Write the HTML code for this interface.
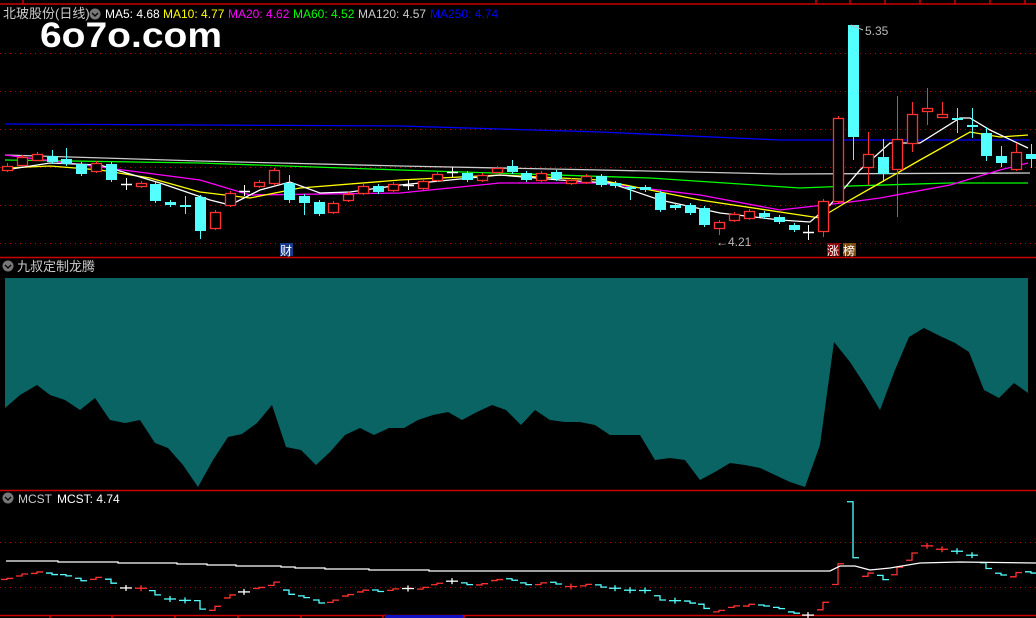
<!DOCTYPE html>
<html><head><meta charset="utf-8"><style>
html,body{margin:0;padding:0;background:#000;width:1036px;height:618px;overflow:hidden}
svg{display:block}
text{font-family:"Liberation Sans","Noto Sans CJK SC",sans-serif}
</style></head><body>
<svg id="s" width="1036" height="618" viewBox="0 0 1036 618" xmlns="http://www.w3.org/2000/svg">
<rect width="1036" height="618" fill="#000"/>
<g stroke="#a00" stroke-width="1" stroke-dasharray="1,4">
<line x1="0" y1="53.5" x2="1036" y2="53.5"/><line x1="0" y1="91.5" x2="1036" y2="91.5"/>
<line x1="0" y1="129.5" x2="1036" y2="129.5"/><line x1="0" y1="167.5" x2="1036" y2="167.5"/>
<line x1="0" y1="205.5" x2="1036" y2="205.5"/><line x1="0" y1="243.5" x2="1036" y2="243.5"/>
<line x1="0" y1="542.5" x2="1036" y2="542.5"/><line x1="0" y1="587.5" x2="1036" y2="587.5"/>
</g>
<g stroke="#c00" stroke-width="1.5">
<line x1="0" y1="4" x2="1036" y2="4"/><line x1="23" y1="0" x2="23" y2="4"/>
<line x1="816" y1="0" x2="816" y2="4"/><line x1="850" y1="0" x2="850" y2="4"/><line x1="885" y1="0" x2="885" y2="4"/><line x1="920" y1="0" x2="920" y2="4"/><line x1="955" y1="0" x2="955" y2="4"/><line x1="990" y1="0" x2="990" y2="4"/><line x1="1025" y1="0" x2="1025" y2="4"/>
<line x1="0" y1="257.5" x2="1036" y2="257.5"/><line x1="0" y1="490.5" x2="1036" y2="490.5"/>
<line x1="0" y1="615.5" x2="1036" y2="615.5"/>
<line x1="50" y1="615" x2="50" y2="618"/><line x1="112" y1="615" x2="112" y2="618"/><line x1="175" y1="615" x2="175" y2="618"/><line x1="238" y1="615" x2="238" y2="618"/><line x1="301" y1="615" x2="301" y2="618"/><line x1="383" y1="615" x2="383" y2="618"/><line x1="464" y1="615" x2="464" y2="618"/>
</g>
<rect x="385" y="615" width="78" height="3" fill="#1010c0"/>
<g id="ind"></g>
<g id="ma" fill="none" stroke-width="1.3"></g>
<g id="cd"></g>
<g id="mc"></g>
<text x="3" y="18" font-size="13" fill="#ccc">北玻股份(日线)</text>
<circle cx="95" cy="14" r="5.5" fill="#777"/><path d="M92 13 L95 16 L98 13" stroke="#000" stroke-width="1.3" fill="none"/>
<text x="105" y="18" font-size="12" fill="#fff">MA5: 4.68</text>
<text x="163" y="18" font-size="12" fill="#ff0">MA10: 4.77</text>
<text x="228" y="18" font-size="12" fill="#f0f">MA20: 4.62</text>
<text x="293" y="18" font-size="12" fill="#0f0">MA60: 4.52</text>
<text x="358" y="18" font-size="12" fill="#ccc">MA120: 4.57</text>
<text x="430" y="18" font-size="12" fill="#00f">MA250: 4.74</text>
<text x="40" y="47" font-size="35" font-weight="bold" fill="#fff" textLength="182" lengthAdjust="spacingAndGlyphs">6o7o.com</text>
<text x="865" y="35" font-size="12" fill="#bbb">5.35</text>
<path d="M851 25 L863 30" stroke="#bbb" fill="none"/>
<text x="716" y="246" font-size="12" fill="#bbb">←4.21</text>
<rect x="280" y="243" width="13" height="13" fill="#1a3a8a"/><text x="280" y="255" font-size="12" fill="#fff">财</text>
<rect x="827" y="243" width="13" height="13" fill="#8a0a0a"/><text x="827" y="255" font-size="12" fill="#fff">涨</text>
<rect x="843" y="243" width="13" height="13" fill="#7a4a10"/><text x="843" y="255" font-size="12" fill="#fff">榜</text>
<circle cx="8" cy="266" r="5.5" fill="#777"/><path d="M5 265 L8 268 L11 265" stroke="#000" stroke-width="1.3" fill="none"/>
<text x="17" y="271" font-size="13" fill="#ccc">九叔定制龙腾</text>
<circle cx="8" cy="498" r="5.5" fill="#777"/><path d="M5 497 L8 500 L11 497" stroke="#000" stroke-width="1.3" fill="none"/>
<text x="18" y="503" font-size="12" fill="#ccc">MCST</text>
<text x="57" y="503" font-size="12" fill="#fff">MCST: 4.74</text>
</svg>
<script>
var NS="http://www.w3.org/2000/svg";
function el(p,t,a){var e=document.createElementNS(NS,t);for(var k in a)e.setAttribute(k,a[k]);p.appendChild(e);return e;}
var pts=[[5,408],[20,395],[37,385],[50,395],[65,400],[80,410],[95,398],[110,420],[125,423],[140,420],[155,443],[168,448],[183,465],[198,487],[213,460],[228,437],[242,434],[257,423],[272,405],[286,447],[301,450],[316,465],[330,452],[345,435],[360,428],[374,435],[389,428],[404,428],[418,420],[433,415],[448,412],[462,420],[477,412],[492,405],[506,410],[521,425],[535,410],[550,420],[565,422],[580,422],[595,425],[610,435],[625,435],[640,435],[655,460],[670,458],[685,460],[700,480],[715,472],[730,463],[745,465],[760,468],[775,475],[790,482],[805,487],[820,445],[834,342],[850,362],[865,385],[880,410],[895,370],[909,337],[924,328],[940,336],[955,343],[969,352],[984,390],[999,398],[1014,383],[1028,393],[1028,278],[5,278]];
el(document.getElementById('ind'),'polygon',{points:pts.map(function(p){return p.join(',')}).join(' '),fill:'#0a6464'});
var ma=document.getElementById('ma');
function line(c,a){el(ma,'polyline',{points:a.map(function(p){return p.join(',')}).join(' '),stroke:c});}
line('#00f',[[5,124],[400,126],[600,132],[780,140],[1030,140]]);
line('#ccc',[[5,155],[200,161],[400,166],[600,170],[780,174],[1030,173]]);
line('#0f0',[[5,160],[200,163],[400,170],[650,178],[800,188],[850,186],[950,183],[1028,183]]);
line('#f0f',[[5,155],[100,167],[200,180],[250,195],[400,193],[500,183],[600,183],[700,195],[780,210],[850,202],[880,198],[950,185],[1000,170],[1028,163]]);
line('#ff0',[[5,168],[50,166],[100,170],[150,178],[200,192],[250,198],[300,188],[400,180],[500,175],[600,180],[700,200],[800,215],[820,218],[850,200],[880,183],[920,160],[970,132],[1000,137],[1028,135]]);
line('#fff',[[5,170],[50,163],[100,165],[160,183],[210,200],[230,205],[260,190],[290,182],[320,193],[350,192],[400,185],[450,180],[500,175],[560,180],[610,183],[660,200],[720,213],[780,220],[810,222],[830,205],[860,170],[890,143],[920,143],[960,118],[970,118],[990,130],[1028,148]]);
var C=[[170,166,163,172],[165,157,155,166],[160,154,152,161],[156,162,150,164],[159,164,148,166],[164,174,162,176],[171,163,161,173],[164,180,162,182],[184,184,178,190],[186,183,181,188],[184,201,182,203],[202,205,200,207],[205,207,196,214],[197,231,195,239],[228,212,210,230],[205,193,191,207],[191,191,185,196],[186,182,180,188],[183,170,168,185],[183,200,175,203],[196,203,194,215],[202,214,200,216],[212,203,201,214],[200,194,192,202],[193,186,184,195],[186,192,184,194],[190,184,182,192],[185,185,180,190],[188,181,179,190],[180,174,172,182],[172,172,167,177],[173,180,171,182],[180,175,173,182],[172,168,166,174],[166,172,160,174],[173,180,171,182],[180,173,171,182],[172,179,170,181],[183,180,178,185],[182,176,174,184],[176,185,174,187],[183,186,181,188],[187,189,186,200],[187,190,185,192],[193,210,191,212],[205,208,203,210],[205,213,203,215],[208,225,206,227],[228,222,220,235],[220,214,212,222],[218,211,209,220],[213,217,211,219],[217,222,215,224],[225,230,223,232],[232,232,225,240],[231,201,199,237],[201,118,116,203],[25,137,25,160],[167,154,132,185],[157,174,139,182],[169,139,96,217],[143,114,102,152],[111,108,88,125],[117,114,102,117],[118,120,108,133],[125,127,108,138],[133,156,127,161],[156,163,146,167],[169,152,143,171],[154,159,144,168]];
var cd=document.getElementById('cd'),mc=document.getElementById('mc');
function mp(y){return 484+0.565*y;}
C.forEach(function(d,i){
 var x=Math.round(7+i*14.84),o=d[0],c=d[1],h=d[2],l=d[3];
 var col=o>c?'#ff3232':(o<c?'#54ffff':'#fff');
 el(cd,'line',{x1:x+.5,y1:h,x2:x+.5,y2:l,stroke:col,'stroke-width':1});
 var t=Math.min(o,c),b=Math.max(o,c);
 if(b-t<1){el(cd,'line',{x1:x-5,y1:t+.5,x2:x+6,y2:t+.5,stroke:col,'stroke-width':1.5});}
 else if(o>c){el(cd,'rect',{x:x-4.5,y:t+.5,width:10,height:b-t,fill:'#000',stroke:col,'stroke-width':1.3});}
 else{el(cd,'rect',{x:x-5,y:t,width:11,height:b-t,fill:col});}
 var m=mp((o+c)/2),dv=(c-o)*0.25;
 if(i==57){dv=(c-o)*0.5;} 
 var y1=m-dv/2,y2=m+dv/2;
 if(Math.abs(y2-y1)<1){
  el(mc,'line',{x1:x-6,y1:m,x2:x+6,y2:m,stroke:col,'stroke-width':1.3});
  el(mc,'line',{x1:x,y1:m-3,x2:x,y2:m+3,stroke:col,'stroke-width':1.3});
 } else
 el(mc,'polyline',{points:(x-6)+','+y1+' '+x+','+y1+' '+x+','+y2+' '+(x+6)+','+y2,fill:'none',stroke:col,'stroke-width':1.3});
});
el(mc,'polyline',{points:'6,561 58,561 58,562 118,562 118,563 177,563 177,564 207,564 207,565 236,565 236,566 281,566 281,567 295,567 295,568 325,568 325,569 369,569 369,570 429,570 429,571 830,571 840,566 855,566 870,570 890,568 920,563 960,562 1036,563',fill:'none',stroke:'#fff','stroke-width':1.3});
</script>
</body></html>
